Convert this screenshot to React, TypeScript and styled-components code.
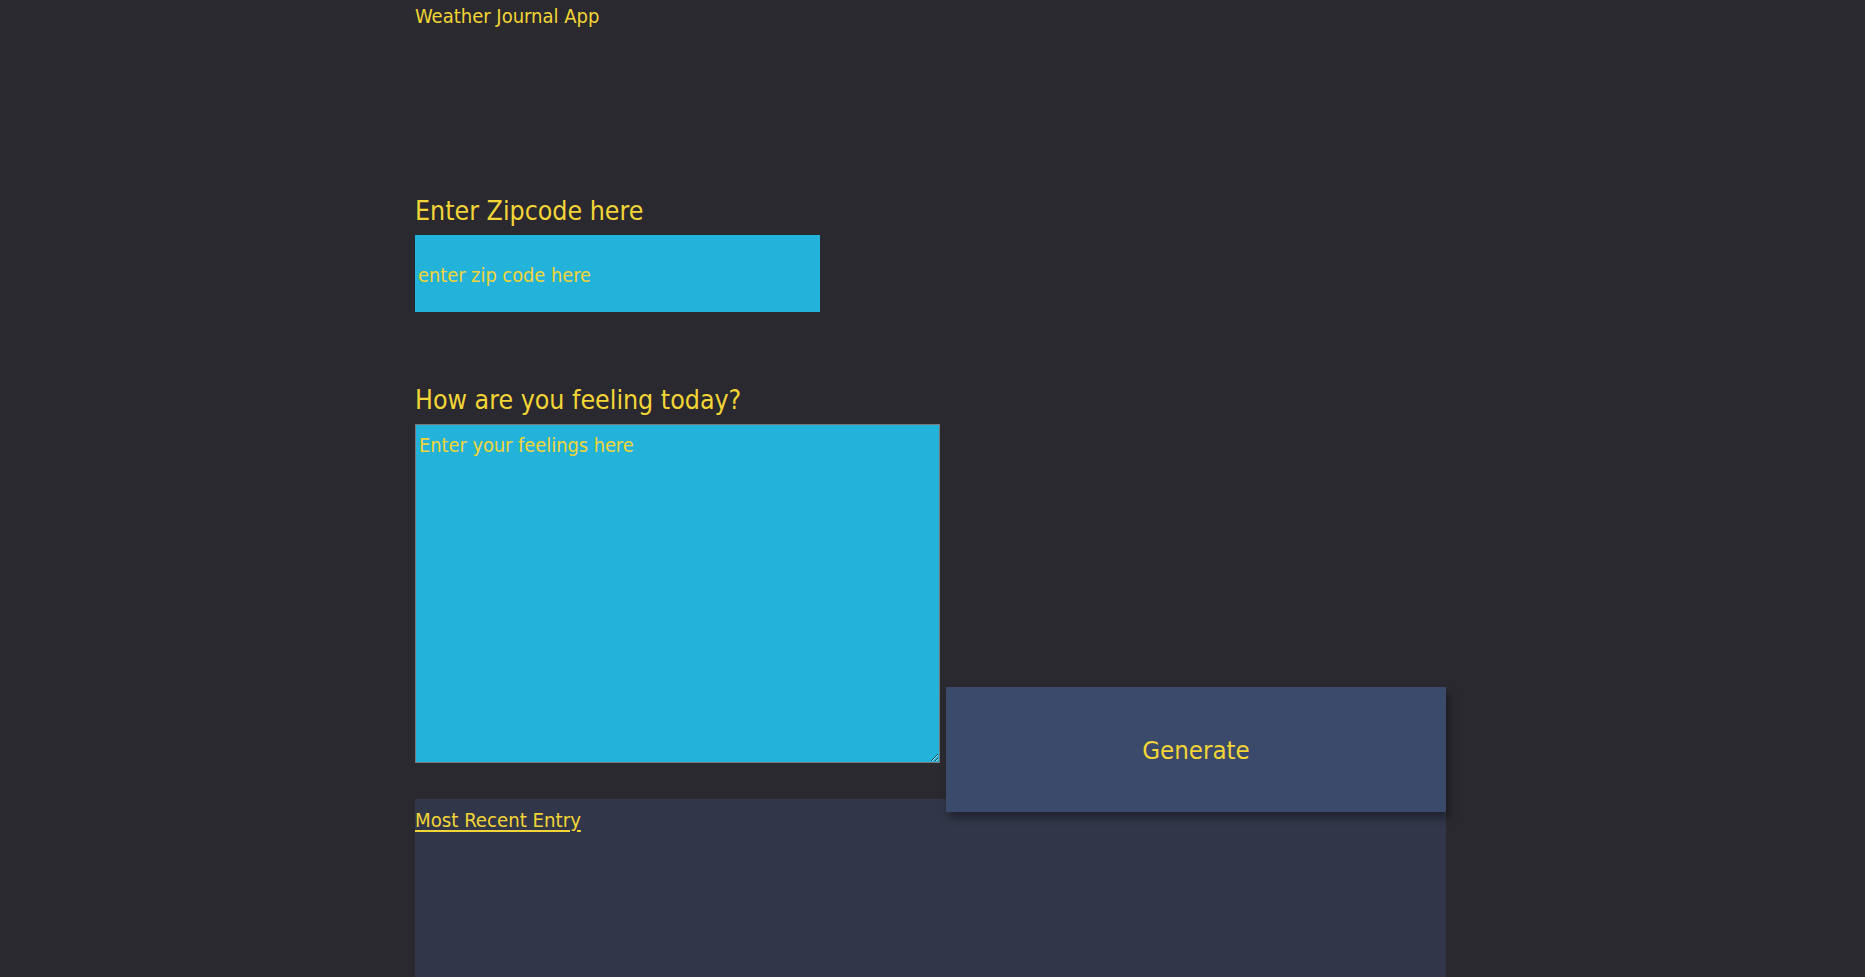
import styled, { createGlobalStyle } from "styled-components";

const GlobalStyle = createGlobalStyle`
	html, body {
		margin: 0;
		padding: 0;
		background: #29292f;
		overflow: hidden;
	}
	body {
		font-family: 'Liberation Sans Narrow', 'DejaVu Sans Condensed', 'Liberation Sans', sans-serif;
		color: #f3d536;
	}
`;

const App_ = styled.div`
	width: 1031px;
	margin-left: 415px;
	display: flex;
	flex-direction: column;
`;

const Headline = styled.div`
	font-size: 20px;
	line-height: 32px;
	height: 32px;
`;

const Holder = styled.div<{ $top: number }>`
	display: flex;
	flex-direction: column;
	margin-top: ${(p) => p.$top}px;
`;

const Label = styled.label`
	display: block;
	font-size: 26.5px;
	line-height: 40px;
	margin-bottom: 4px;
`;

const ZipInput = styled.input`
	box-sizing: border-box;
	width: 405px;
	height: 77px;
	border: none;
	outline: none;
	padding: 3px 3px 0;
	background: #22b2da;
	color: #f3d536;
	font-family: inherit;
	font-size: 19.8px;

	&::placeholder {
		color: #f3d536;
		opacity: 1;
	}
`;

const FeelRow = styled.div`
	display: flex;
	align-items: flex-end;
	gap: 6px;
`;

const FeelText = styled.textarea`
	box-sizing: border-box;
	width: 525px;
	height: 339px;
	border: 1px solid #7a7a7a;
	padding: 9px 3px 2px;
	background: #22b2da;
	color: #f3d536;
	font-family: inherit;
	font-size: 19.8px;
	outline: none;

	&::placeholder {
		color: #f3d536;
		opacity: 1;
	}
`;

const Generate = styled.button`
	position: relative;
	z-index: 1;
	width: 500px;
	height: 125px;
	margin-bottom: -49px;
	padding: 1px 0 0;
	border: none;
	background: #3b4a6b;
	color: #f3d536;
	font-family: inherit;
	font-size: 25.6px;
	box-shadow: 3px 6px 8px rgba(0, 0, 0, 0.35);
	cursor: pointer;
`;

const EntryHolder = styled.div`
	margin-top: 36px;
	height: 178px;
	background: #313648;
	padding-top: 6px;
	box-sizing: border-box;
`;

const EntryTitle = styled.div`
	font-size: 20.2px;
	line-height: 30px;
	text-decoration: underline;
	text-underline-offset: 3px;
	width: max-content;
`;

function App() {
	return (
		<>
			<GlobalStyle />
			<App_>
				<Headline>Weather Journal App</Headline>
				<Holder $top={159}>
					<Label htmlFor="zip">Enter Zipcode here</Label>
					<ZipInput type="text" id="zip" placeholder="enter zip code here" />
				</Holder>
				<Holder $top={68}>
					<Label htmlFor="feelings">How are you feeling today?</Label>
					<FeelRow>
						<FeelText id="feelings" placeholder="Enter your feelings here" />
						<Generate id="generate">Generate</Generate>
					</FeelRow>
				</Holder>
				<EntryHolder>
					<EntryTitle>Most Recent Entry</EntryTitle>
				</EntryHolder>
			</App_>
		</>
	);
}

export default App;
